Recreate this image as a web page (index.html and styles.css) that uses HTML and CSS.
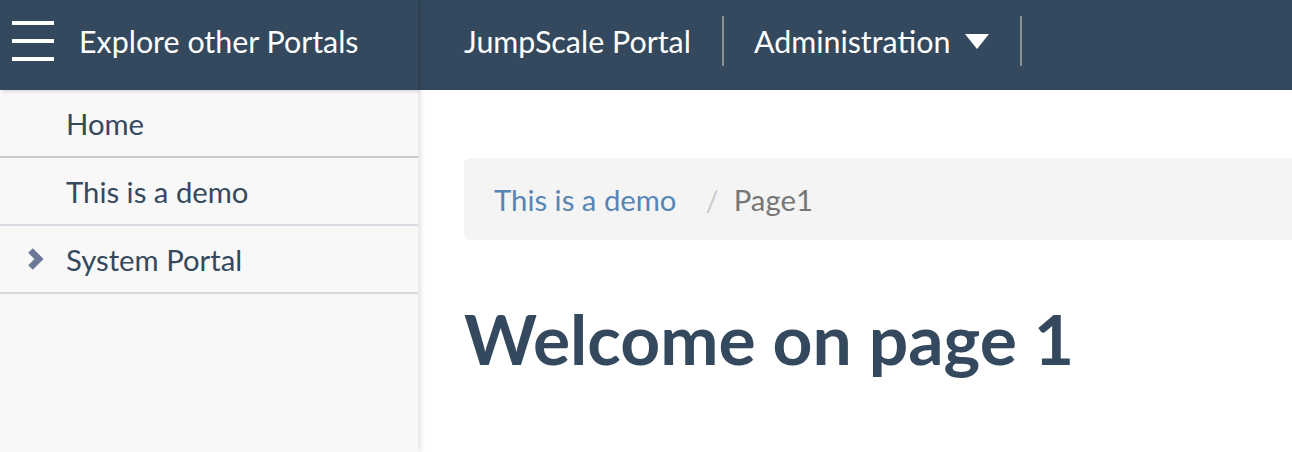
FILE: index.html
```html
<!DOCTYPE html>
<html>
<head>
<meta charset="utf-8">
<link rel="stylesheet" href="styles.css">
</head>
<body>
<header class="topbar">
  <div class="brand">
    <span class="burger"><i></i><i></i><i></i></span>
    <span class="brand-text">Explore other Portals</span>
  </div>
  <nav class="topnav">
    <a class="nav-item">JumpScale Portal</a>
    <span class="nav-sep"></span>
    <a class="nav-item">Administration <span class="caret"></span></a>
    <span class="nav-sep"></span>
  </nav>
</header>
<div class="layout">
  <aside class="sidebar">
    <ul class="menu">
      <li class="menu-item"><span class="menu-icon"></span>Home</li>
      <li class="menu-item alt"><span class="menu-icon"></span>This is a demo</li>
      <li class="menu-item"><span class="menu-icon"><svg width="18" height="24" viewBox="0 0 18 24"><polyline points="3.5,3.5 12,12 3.5,20.5" fill="none" stroke="#6c7996" stroke-width="6.5" stroke-linejoin="miter"/></svg></span>System Portal</li>
    </ul>
  </aside>
  <main class="content">
    <div class="breadcrumb">
      <a class="crumb-link">This is a demo</a>
      <span class="crumb-sep">/</span>
      <span class="crumb-current">Page1</span>
    </div>
    <h1 class="title">Welcome on page 1</h1>
  </main>
</div>
</body>
</html>
```
FILE: styles.css
```css
html, body {
  margin: 0;
  padding: 0;
  overflow: hidden;
  background: #fff;
}
body {
  font-family: Lato, "Open Sans", sans-serif;
  width: 1292px;
  height: 452px;
}
.topbar {
  display: flex;
  height: 90px;
  background: #34495e;
  color: #fff;
  position: relative;
  z-index: 2;
}
.brand {
  width: 418px;
  display: flex;
  align-items: center;
  padding-bottom: 8px;
  box-sizing: border-box;
  box-shadow: 2px 1px 4px rgba(0,0,0,0.18);
  flex-shrink: 0;
}
.burger {
  display: flex;
  flex-direction: column;
  gap: 14px;
  margin-left: 12px;
  width: 42px;
}
.burger i {
  display: block;
  height: 4px;
  background: #fff;
}
.brand-text {
  margin-left: 25px;
  font-size: 30.4px;
  font-weight: 400;
}
.topnav {
  display: flex;
  align-items: center;
  padding-left: 46px;
  padding-bottom: 8px;
}
.nav-item {
  font-size: 30.4px;
  color: #fff;
  display: flex;
  align-items: center;
}
.nav-sep {
  width: 2px;
  height: 50px;
  background: #8a8f96;
  margin: 0 30px 0 31px;
}
.caret {
  display: inline-block;
  width: 0;
  height: 0;
  border-left: 12px solid transparent;
  border-right: 12px solid transparent;
  border-top: 15px solid #fff;
  margin-left: 15px;
}
.layout {
  display: flex;
  height: 362px;
}
.sidebar {
  width: 418px;
  flex-shrink: 0;
  background: #f8f8f8;
  box-shadow: 3px 0 5px rgba(0,0,0,0.10);
  position: relative;
  z-index: 1;
}
.menu {
  list-style: none;
  margin: 0;
  padding: 0;
}
.menu-item {
  height: 66px;
  display: flex;
  align-items: center;
  font-size: 29.3px;
  color: #34495e;
  border-bottom: 2px solid #d6dce1;
}
.menu-item:first-child {
  border-bottom-color: #c8c8c8;
}
.menu-icon {
  width: 66px;
  display: flex;
  justify-content: flex-end;
  padding-right: 21px;
  box-sizing: border-box;
}
.content {
  flex: 1;
  padding: 68px 0 0 46px;
  overflow: hidden;
}
.breadcrumb {
  height: 82px;
  width: 900px;
  background: #f4f4f4;
  border-radius: 6px;
  display: flex;
  align-items: center;
  padding-left: 30px;
  font-size: 29.3px;
  box-sizing: border-box;
}
.crumb-link {
  color: #5785b5;
}
.crumb-sep {
  color: #ccc;
  margin: 0 15px 0 29px;
}
.crumb-current {
  color: #777;
}
.title {
  margin: 60px 0 0 0;
  font-size: 69.6px;
  font-weight: 700;
  color: #34495e;
  line-height: 1.1;
}
```
